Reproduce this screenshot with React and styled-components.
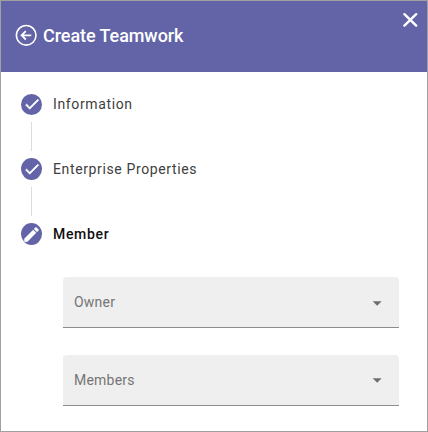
import React from "react";
import styled, { createGlobalStyle } from "styled-components";

const GlobalStyle = createGlobalStyle`
  * { box-sizing: border-box; }
  body { margin: 0; background: #fff; font-family: Roboto, "Liberation Sans", sans-serif; }
`;

const Dialog = styled.main`
  width: 428px;
  height: 432px;
  border: 1px solid #a0a0a0;
  background: #fff;
  overflow: hidden;
`;

const Header = styled.header`
  display: flex;
  align-items: flex-start;
  height: 71px;
  padding: 23px 9px 0 14px;
  background: #6264a7;
  color: #fff;
`;

const IconButton = styled.button`
  display: flex;
  flex: none;
  padding: 0;
  border: 0;
  background: none;
  color: inherit;
`;

const CloseButton = styled(IconButton)`
  margin: -12px 0 0 auto;
`;

const Title = styled.h1`
  margin: 0 0 0 4px;
  font-size: 18px;
  font-weight: 500;
  line-height: 24px;
  letter-spacing: -0.07px;
`;

const Steps = styled.section`
  padding: 21px 28px 0 20px;
`;

const Step = styled.div`
  display: flex;
  align-items: center;
  height: 22px;
`;

const Marker = styled.span`
  display: flex;
  align-items: center;
  justify-content: center;
  width: 21px;
  height: ${({ $tall }) => ($tall ? 22 : 21)}px;
  border-radius: 50%;
  background: #6264a7;
  color: #fff;
`;

const StepLabel = styled.span`
  margin-left: 11px;
  font-size: 14px;
  line-height: 20px;
  letter-spacing: ${({ $active }) => ($active ? 0.68 : 0.63)}px;
  font-weight: ${({ $active }) => ($active ? 500 : 400)};
  color: ${({ $active }) => ($active ? "#101010" : "#404040")};
`;

const Connector = styled.div`
  width: 1px;
  height: 29px;
  margin: 7px 0 7px 10px;
  background: #dcdcdc;
`;

const Fields = styled.div`
  display: grid;
  gap: 27px;
  margin: 32px 0 0 42px;
`;

const Select = styled.div`
  display: flex;
  align-items: center;
  justify-content: space-between;
  height: 51px;
  padding: 0 17px 0 11px;
  border-bottom: 1px solid #8c8c8c;
  border-radius: 4px 4px 0 0;
  background: #efefef;
  color: #757575;
  font-size: 14px;
  letter-spacing: 0.22px;
`;

const Arrow = styled.svg`
  margin-top: ${({ $low }) => ($low ? 2 : 0)}px;
`;

const BackIcon = () => (
  <svg width="24" height="24" viewBox="0 0 24 24" fill="none" stroke="currentColor" strokeWidth="1.6">
    <circle cx="11.2" cy="11.3" r="9.8" />
    <path d="M16.3 11.3H6.8M10.8 7.1l-4.2 4.2 4.2 4.2" strokeWidth="1.8" />
  </svg>
);

const CloseIcon = () => (
  <svg width="16" height="16" viewBox="0 0 16 16" stroke="currentColor" strokeWidth="2.4" strokeLinecap="round">
    <path d="M2.4 2.2l11.8 11.4M14.2 2.2L2.4 13.6" />
  </svg>
);

const CheckIcon = () => (
  <svg width="18" height="18" viewBox="0 0 24 24" fill="currentColor">
    <path d="M9 16.17L4.83 12l-1.42 1.41L9 19 21 7l-1.41-1.41z" stroke="currentColor" strokeWidth=".8" />
  </svg>
);

const PencilIcon = () => (
  <svg width="19" height="19" viewBox="0 0 24 24" fill="currentColor">
    <path d="M3 17.25V21h3.75L17.81 9.94l-3.75-3.75L3 17.25zM20.71 7.04c.39-.39.39-1.02 0-1.41l-2.34-2.34a1 1 0 0 0-1.41 0l-1.83 1.83 3.75 3.75 1.83-1.83z" stroke="currentColor" strokeWidth=".4" />
  </svg>
);

const ArrowIcon = ({ low }) => (
  <Arrow $low={low} width="10" height="5" viewBox="0 0 10 5" fill="#6e6e6e">
    <path d="M.7 .3h9L5.2 4.8z" />
  </Arrow>
);

export default function App() {
  return (
    <>
      <GlobalStyle />
      <Dialog>
        <Header>
          <IconButton aria-label="Back"><BackIcon /></IconButton>
          <Title>Create Teamwork</Title>
          <CloseButton aria-label="Close"><CloseIcon /></CloseButton>
        </Header>
        <Steps>
          <Step>
            <Marker><CheckIcon /></Marker>
            <StepLabel>Information</StepLabel>
          </Step>
          <Connector />
          <Step>
            <Marker $tall><CheckIcon /></Marker>
            <StepLabel>Enterprise Properties</StepLabel>
          </Step>
          <Connector />
          <Step>
            <Marker $tall><PencilIcon /></Marker>
            <StepLabel $active>Member</StepLabel>
          </Step>
          <Fields>
            <Select>Owner<ArrowIcon low /></Select>
            <Select>Members<ArrowIcon /></Select>
          </Fields>
        </Steps>
      </Dialog>
    </>
  );
}
